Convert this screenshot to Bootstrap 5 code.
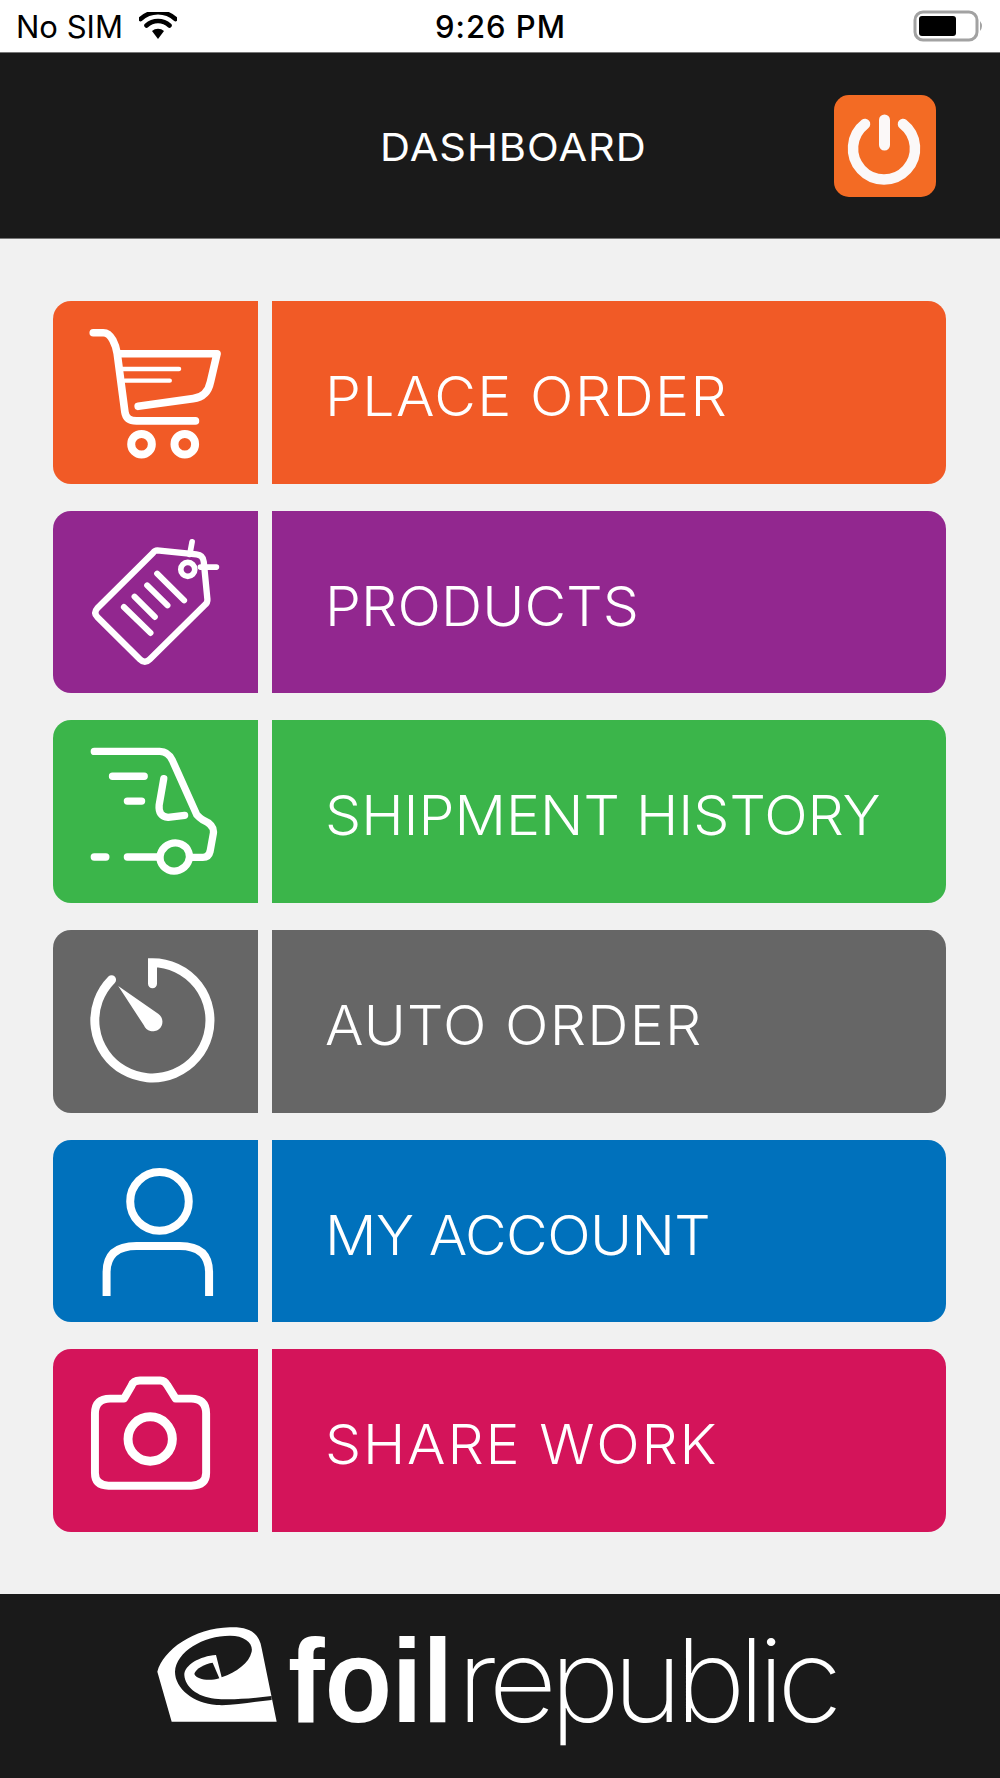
<!DOCTYPE html>
<html lang="en">
<head>
<meta charset="utf-8">
<title>Dashboard</title>
<link href="https://cdn.jsdelivr.net/npm/bootstrap@5.3.0/dist/css/bootstrap.min.css" rel="stylesheet">
<style>
html,body{height:100%;margin:0}
body{background:#f1f1f1;font-family:Inter,"Liberation Sans",sans-serif}
.screen{height:1778px}
.statusbar{height:53px;flex:none;background:#fff;border-bottom:1px solid #777;padding:0 15px 0 16px;color:#000;font-size:31px;line-height:1}
.statusbar .lft{gap:16px;width:300px}
.statusbar .clock{font-weight:500;letter-spacing:1px;font-size:31px}
.statusbar .rgt{width:300px}
.topbar{height:186px;flex:none;background:#1a1a1a;border-bottom:1px solid #777;padding-right:64px;padding-left:192px}
.topbar h1{font-size:38.5px;font-weight:400;color:#fff;margin:0;padding-top:4px}
.topbar h1 span{display:inline-block;transform:scaleX(1.08);letter-spacing:.9px}
.powerbtn{width:102px;height:102px;background:#f36b24;border:0;border-radius:15px;padding:0;flex:none}
.powerbtn svg{display:block}
.menu{flex:1;min-height:0;display:grid;grid-template-rows:repeat(6,minmax(0,1fr));gap:27px;padding:62px 54px 62px 53px}
.menurow{gap:14px;text-decoration:none;min-height:0}
.tile{width:205px;flex:none;border-radius:18px 0 0 18px}
.tile svg{display:block;width:100%;height:100%}
.lbl{flex:1;border-radius:0 18px 18px 0;padding:8px 0 0 53px;color:#fff;font-size:54.5px;font-weight:300;white-space:nowrap;line-height:1}
.lbl span{display:inline-block;transform:scaleX(1.05);transform-origin:left center}
.ls-a{letter-spacing:1.3px}.ls-b{letter-spacing:.1px}.ls-c{letter-spacing:0}.ls-d{letter-spacing:1.2px}.ls-e{letter-spacing:-.6px}.ls-f{letter-spacing:1.7px}
.c-orange{background:#f15a26}.c-purple{background:#92278f}.c-green{background:#3bb54a}.c-gray{background:#666}.c-blue{background:#0071bc}.c-pink{background:#d4145a}
.ic{fill:none;stroke:#fff;stroke-linecap:round;stroke-linejoin:round}
.ic-miter{stroke-linejoin:miter}
.footbar{height:184px;flex:none;background:#1a1a1a}
.footbar svg{display:block}
</style>
</head>
<body>
<div class="screen d-flex flex-column">
  <div class="statusbar d-flex align-items-center justify-content-between">
    <div class="lft d-flex align-items-center">
      <span>No SIM</span>
      <svg width="38" height="28" viewBox="0 0 38 28"><path d="M19 27l-6-8a9 9 0 0 1 12 0z" fill="#000"/><path d="M7.5 13.5a17 17 0 0 1 23 0M1.5 7a26 26 0 0 1 35 0" fill="none" stroke="#000" stroke-width="4.6" stroke-linecap="round"/></svg>
    </div>
    <span class="clock">9:26 PM</span>
    <div class="rgt d-flex justify-content-end">
      <svg width="72" height="32" viewBox="0 0 72 32"><rect x="2" y="2" width="62" height="28" rx="8" fill="none" stroke="#a2a2a2" stroke-width="3"/><rect x="6" y="6" width="37" height="20" rx="3" fill="#000"/><path d="M67 11q4 5 0 10z" fill="#a2a2a2"/></svg>
    </div>
  </div>
  <div class="topbar d-flex align-items-center justify-content-between">
    <h1 class="flex-grow-1 text-center"><span>DASHBOARD</span></h1>
    <button class="powerbtn" type="button" aria-label="Log out"><svg width="102" height="102" viewBox="0 0 102 102"><path d="M31 29A31 31 0 1 0 69 29" fill="none" stroke="#fbf8f8" stroke-width="10.5" stroke-linecap="round"/><path d="M50.5 25v25" stroke="#fbf8f8" stroke-width="11" stroke-linecap="round"/></svg></button>
  </div>
  <div class="menu">
    <a class="menurow d-flex" href="#">
      <div class="tile c-orange"><svg viewBox="39 32 616 548"><g class="ic"><path stroke-width="23" d="M160 127H190C215 127 228 165 232 190L255 365C258 385 270 392 290 392H467"/><path stroke-width="23" d="M238 190H532L512 275C505 310 485 322 460 325L295 348"/><path stroke-width="13" d="M248 236H418M255 271H390"/><circle cx="305" cy="462" r="31" stroke-width="24"/><circle cx="435" cy="462" r="31" stroke-width="24"/></g></svg></div>
      <div class="lbl c-orange d-flex align-items-center"><span class="ls-a">PLACE ORDER</span></div>
    </a>
    <a class="menurow d-flex" href="#">
      <div class="tile c-purple"><svg viewBox="39 660 616 548"><g class="ic" stroke-width="19"><path d="M352 778L470 790Q490 792 492 812L503 925Q504 935 495 942L330 1105Q315 1120 300 1105L172 978Q160 965 172 952L340 785Q345 778 352 778Z"/><circle cx="444" cy="835" r="21" stroke-width="17"/><path stroke-width="17" d="M457 752L450 790M482 828H530"/><path stroke-width="18" d="M252 948L332 1026M284 917L345 978M322 883L383 943M352 848L433 928"/></g></svg></div>
      <div class="lbl c-purple d-flex align-items-center"><span class="ls-b">PRODUCTS</span></div>
    </a>
    <a class="menurow d-flex" href="#">
      <div class="tile c-green"><svg viewBox="39 28 616 552"><g class="ic" stroke-width="22"><path d="M162 123H360Q385 123 398 150L472 315Q478 322 490 330Q525 345 522 370L512 425Q508 443 490 443H455"/><path d="M217 198H313M262 273H305M162 442H197M262 442H360"/><path d="M372 205L358 285Q355 320 385 322L435 316"/><ellipse cx="405" cy="442" rx="45" ry="42" transform="rotate(-20 405 442)"/></g></svg></div>
      <div class="lbl c-green d-flex align-items-center"><span class="ls-c">SHIPMENT HISTORY</span></div>
    </a>
    <a class="menurow d-flex" href="#">
      <div class="tile c-gray"><svg viewBox="39 659 616 548"><path class="ic ic-miter" stroke-width="27" d="M338 820V757A173 173 0 1 1 215 808"/><path fill="#fff" d="M235 827L355 910A29 29 0 1 1 312 945Z"/></svg></div>
      <div class="lbl c-gray d-flex align-items-center"><span class="ls-d">AUTO ORDER</span></div>
    </a>
    <a class="menurow d-flex" href="#">
      <div class="tile c-blue"><svg viewBox="39 27 616 548"><g fill="none" stroke="#fff" stroke-width="24"><circle cx="359" cy="211" r="88"/><path d="M200 495V425Q200 345 290 345H420Q508 345 508 425V495"/></g></svg></div>
      <div class="lbl c-blue d-flex align-items-center"><span class="ls-e">MY ACCOUNT</span></div>
    </a>
    <a class="menurow d-flex" href="#">
      <div class="tile c-pink"><svg viewBox="39 655 616 552"><g class="ic"><path stroke-width="24" d="M164 1030V850Q164 805 210 805H252L275 765Q280 750 300 750H362Q375 750 383 765L408 805H455Q500 805 500 850V1030Q500 1068 455 1068H205Q164 1068 164 1030Z"/><circle cx="331" cy="927" r="67" stroke-width="27"/></g></svg></div>
      <div class="lbl c-pink d-flex align-items-center"><span class="ls-f">SHARE WORK</span></div>
    </a>
  </div>
  <div class="footbar d-flex align-items-center justify-content-center">
    <svg width="700" height="150" viewBox="0 0 700 150" role="img" aria-label="foil republic">
      <g transform="translate(0 9) scale(.3333)"><path fill="#fff" d="M22 155C40 90 130 25 240 22C300 20 328 40 335 85L380 305H65Z"/><path fill="#1a1a1a" d="M365 228C300 236 240 240 195 236C140 230 105 200 103 165C103 135 150 108 198 105L215 172C260 155 297 130 305 95C310 70 285 47 240 47C160 47 78 95 75 155C75 205 130 250 200 255C250 258 310 245 365 240Z"/><path fill="#1a1a1a" d="M188 128C165 130 135 148 133 162C140 178 175 185 208 175Z"/></g>
      <text x="138" y="111" font-family="Liberation Sans" font-weight="700" font-size="118" fill="#fff" textLength="165" lengthAdjust="spacingAndGlyphs">foil</text>
      <text x="307" y="111" font-family="Inter" font-weight="200" font-size="115" letter-spacing="-7" fill="#fff" textLength="378" lengthAdjust="spacingAndGlyphs">republic</text>
    </svg>
  </div>
</div>
<script src="https://cdn.jsdelivr.net/npm/bootstrap@5.3.0/dist/js/bootstrap.bundle.min.js"></script>
</body>
</html>
